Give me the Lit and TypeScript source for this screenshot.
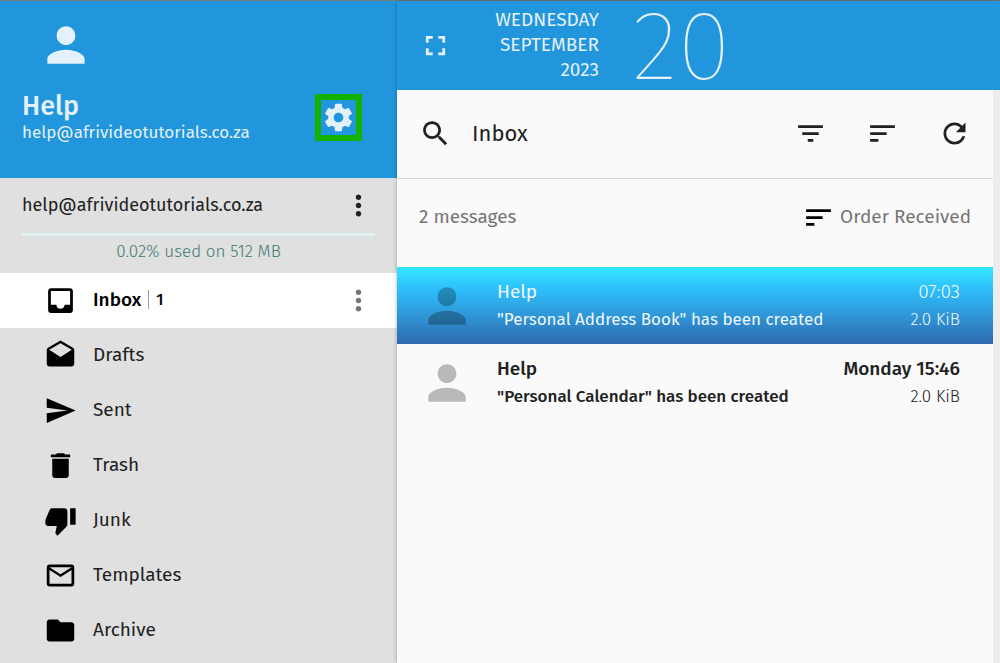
import { LitElement, html, css, svg, nothing } from "lit";
import { customElement, property, state } from "lit/decorators.js";
import { classMap } from "lit/directives/class-map.js";

const ICONS: Record<string, string> = {
  person: "M12 12c2.21 0 4-1.79 4-4s-1.79-4-4-4-4 1.79-4 4 1.79 4 4 4zm0 2c-2.67 0-8 1.34-8 4v2h16v-2c0-2.66-5.33-4-8-4z",
  settings: "M19.43 12.98c.04-.32.07-.64.07-.98s-.03-.66-.07-.98l2.11-1.65c.19-.15.24-.42.12-.64l-2-3.46c-.12-.22-.39-.3-.61-.22l-2.49 1c-.52-.4-1.08-.73-1.69-.98l-.38-2.65C14.46 2.18 14.25 2 14 2h-4c-.25 0-.46.18-.49.42l-.38 2.65c-.61.25-1.17.59-1.69.98l-2.49-1c-.23-.09-.49 0-.61.22l-2 3.46c-.13.22-.07.49.12.64l2.11 1.65c-.04.32-.07.65-.07.98s.03.66.07.98l-2.11 1.65c-.19.15-.24.42-.12.64l2 3.46c.12.22.39.3.61.22l2.49-1c.52.4 1.08.73 1.69.98l.38 2.65c.03.24.24.42.49.42h4c.25 0 .46-.18.49-.42l.38-2.65c.61-.25 1.17-.59 1.69-.98l2.49 1c.23.09.49 0 .61-.22l2-3.46c.12-.22.07-.49-.12-.64l-2.11-1.65zM12 15.5c-1.93 0-3.5-1.57-3.5-3.5s1.57-3.5 3.5-3.5 3.5 1.57 3.5 3.5-1.57 3.5-3.5 3.5z",
  more: "M12 8c1.1 0 2-.9 2-2s-.9-2-2-2-2 .9-2 2 .9 2 2 2zm0 2c-1.1 0-2 .9-2 2s.9 2 2 2 2-.9 2-2-.9-2-2-2zm0 6c-1.1 0-2 .9-2 2s.9 2 2 2 2-.9 2-2-.9-2-2-2z",
  inbox: "M19 3H4.99c-1.11 0-1.98.89-1.98 2L3 19c0 1.1.88 2 1.99 2H19c1.1 0 2-.9 2-2V5c0-1.11-.9-2-2-2zm0 12h-4c0 1.66-1.35 3-3 3s-3-1.34-3-3H4.99V5H19v10z",
  drafts: "M21.99 8c0-.72-.37-1.35-.94-1.7L12 1 2.95 6.3C2.38 6.65 2 7.28 2 8v10c0 1.1.9 2 2 2h16c1.1 0 2-.9 2-2l-.01-10zM12 13L3.74 7.84 12 3l8.26 4.84L12 13z",
  sent: "M2.01 21L23 12 2.01 3 2 10l15 2-15 2z",
  trash: "M6 19c0 1.1.9 2 2 2h8c1.1 0 2-.9 2-2V7H6v12zM19 4h-3.5l-1-1h-5l-1 1H5v2h14V4z",
  junk: "M15 3H6c-.83 0-1.54.5-1.84 1.22l-3.02 7.05c-.09.23-.14.47-.14.73v1.91l.01.01L1 14c0 1.1.9 2 2 2h6.31l-.95 4.57-.03.32c0 .41.17.79.44 1.06L9.83 23l6.59-6.59c.36-.36.58-.86.58-1.41V5c0-1.1-.9-2-2-2zm4 0v12h4V3h-4z",
  templates: "M20 4H4c-1.1 0-1.99.9-1.99 2L2 18c0 1.1.9 2 2 2h16c1.1 0 2-.9 2-2V6c0-1.1-.9-2-2-2zm0 14H4V8l8 5 8-5v10zm-8-7L4 6h16l-8 5z",
  archive: "M10 4H4c-1.1 0-1.99.9-1.99 2L2 18c0 1.1.9 2 2 2h16c1.1 0 2-.9 2-2V8c0-1.1-.9-2-2-2h-8l-2-2z",
  fullscreen: "M7 14H5v5h5v-2H7v-3zm-2-4h2V7h3V5H5v5zm12 7h-3v2h5v-5h-2v3zM14 5v2h3v3h2V5h-5z",
  search: "M15.5 14h-.79l-.28-.27C15.41 12.59 16 11.11 16 9.5 16 5.91 13.09 3 9.5 3S3 5.91 3 9.5 5.91 16 9.5 16c1.61 0 3.09-.59 4.23-1.57l.27.28v.79l5 4.99L20.49 19l-4.99-5zm-6 0C7.01 14 5 11.99 5 9.5S7.01 5 9.5 5 14 7.01 14 9.5 11.99 14 9.5 14z",
  filter: "M10 18h4v-2h-4v2zM3 6v2h18V6H3zm3 7h12v-2H6v2z",
  sort: "M3 18h6v-2H3v2zM3 6v2h18V6H3zm0 7h12v-2H3v2z",
  refresh: "M17.65 6.35C16.2 4.9 14.21 4 12 4c-4.42 0-7.99 3.58-7.99 8s3.57 8 7.99 8c3.73 0 6.84-2.55 7.73-6h-2.08c-.82 2.33-3.04 4-5.65 4-3.31 0-6-2.69-6-6s2.69-6 6-6c1.66 0 3.14.69 4.22 1.78L13 11h7V4l-2.35 2.35z",
};

@customElement("mail-icon")
class MailIcon extends LitElement {
  @property() name = "";
  static styles = css`
    :host { display: block; flex: none; width: 33px; height: 33px; }
    svg { display: block; width: 100%; height: 100%; fill: currentColor; }
  `;
  render() {
    return html`<svg viewBox="0 0 24 24" aria-hidden="true">${svg`<path d=${ICONS[this.name] ?? ""}></path>`}</svg>`;
  }
}

interface Folder { name: string; icon: string; unread?: number; }
interface Message { from: string; subject: string; when: string; size: string; unread: boolean; selected: boolean; }

const FOLDERS: Folder[] = [
  { name: "Inbox", icon: "inbox", unread: 1 },
  { name: "Drafts", icon: "drafts" },
  { name: "Sent", icon: "sent" },
  { name: "Trash", icon: "trash" },
  { name: "Junk", icon: "junk" },
  { name: "Templates", icon: "templates" },
  { name: "Archive", icon: "archive" },
];

const MESSAGES: Message[] = [
  { from: "Help", subject: '"Personal Address Book" has been created', when: "07:03", size: "2.0 KiB", unread: false, selected: true },
  { from: "Help", subject: '"Personal Calendar" has been created', when: "Monday 15:46", size: "2.0 KiB", unread: true, selected: false },
];

@customElement("app-root")
class AppRoot extends LitElement {
  @state() private current = "Inbox";

  static styles = css`
    :host {
      display: grid;
      grid-template-columns: 397px minmax(0, 1fr);
      box-sizing: border-box;
      min-height: 100vh;
      border-top: 1px solid #75797c;
      background: #fafafa;
      color: #212121;
      font: 400 19px/26px "Fira Sans", "Noto Sans", sans-serif;
    }
    * { box-sizing: border-box; }
    h1, h2, p, ul { margin: 0; padding: 0; font: inherit; }
    ul { list-style: none; }
    button {
      display: block;
      padding: 0;
      border: 0;
      background: none;
      color: inherit;
      font: inherit;
      text-align: left;
      cursor: pointer;
    }

    .sidebar { display: flex; flex-direction: column; background: #e0e0e0; }
    .profile {
      display: flex;
      flex-direction: column;
      height: 177px;
      padding: 16px 22px 0;
      background: #2196dc;
      color: #e4f1fb;
    }
    .avatar { width: 56px; height: 56px; }
    .profile .avatar { margin-left: 16px; }
    .identity { display: flex; align-items: flex-start; justify-content: space-between; padding-top: 17px; }
    .name { font-size: 27px; line-height: 32px; font-weight: 500; }
    .mail { font-size: 17px; line-height: 22px; }
    .gear { margin: 4px 13px 0 0; padding: 1px; border: 6px solid #12b300; }

    .account { padding: 14px 22px 0; height: 95px; }
    .account-line { display: flex; justify-content: space-between; align-items: center; height: 27px; font-size: 18px; }
    .account-line span { padding-bottom: 2px; }
    .more { width: 33px; }
    .quota { display: block; height: 3px; margin-top: 14px; background: #e0f2f1; }
    .quota-text { margin-top: 3px; text-align: center; font-size: 17px; line-height: 26px; font-weight: 300; color: #3f7a74; }

    .folder { display: flex; align-items: center; height: 55px; padding: 0 22px 0 44px; }
    .folder.current { background: #fff; color: #000; font-weight: 500; }
    .folder .open { display: flex; align-items: center; flex: 1; gap: 16px; height: 55px; }
    .folder mail-icon { color: #000; }
    .label { display: flex; align-items: center; gap: 7px; padding-bottom: 2px; }
    .count { padding-left: 7px; border-left: 1px solid #9e9e9e; font-size: 16px; line-height: 19px; }
    .folder .more mail-icon { color: #757575; }

    .main { display: flex; flex-direction: column; box-shadow: 0 0 4px rgba(0, 0, 0, 0.3); }
    .banner {
      display: flex;
      align-items: center;
      height: 89px;
      padding-left: 22px;
      background: #2196dc;
      color: #e4f1fb;
    }
    .banner .weekday { margin-left: 42px; width: 105px; padding-bottom: 2px; text-align: right; line-height: 25px; }
    .day { margin-left: 33px; font-size: 98px; line-height: 88px; font-weight: 100; }

    .content { flex: 1; border-right: 7px solid #ededed; }
    .toolbar {
      display: flex;
      align-items: center;
      height: 89px;
      padding: 0 22px 1px;
      border-bottom: 1px solid #d9d9d9;
    }
    .toolbar h2 { flex: 1; margin-left: 20px; font-size: 22px; }
    .actions { display: flex; gap: 39px; }
    .list-head {
      display: flex;
      align-items: center;
      justify-content: space-between;
      height: 88px;
      padding: 0 22px 12px;
      color: #757575;
    }
    .order { display: flex; align-items: center; gap: 5px; }
    .order mail-icon { color: #000; }

    .message {
      display: grid;
      grid-template-columns: 56px minmax(0, 1fr) auto;
      align-items: center;
      column-gap: 22px;
      width: 100%;
      height: 77px;
      padding: 0 33px 0 22px;
    }
    .message .avatar { color: #b9b9b9; }
    .message .text { display: block; }
    .line { display: block; line-height: 28px; }
    .sub { display: block; font-size: 17px; line-height: 27px; }
    .side { text-align: right; font-weight: 300; }
    .unread .text, .unread .side .line { font-weight: 500; }
    .selected {
      background: linear-gradient(#36e6ff, #2ebdfb 30%, #2f9ada 60%, #2f68ae);
      color: #eef8fe;
    }
    .selected .avatar { color: rgba(0, 0, 0, 0.27); }
  `;

  private renderFolder(f: Folder) {
    const current = f.name === this.current;
    return html`<li class=${classMap({ folder: true, current })}>
      <button class="open" @click=${() => (this.current = f.name)}>
        <mail-icon name=${f.icon}></mail-icon>
        <span class="label">${f.name}${f.unread ? html`<span class="count">${f.unread}</span>` : nothing}</span>
      </button>
      ${current ? html`<button class="more" aria-label="Folder options"><mail-icon name="more"></mail-icon></button>` : nothing}
    </li>`;
  }

  private renderMessage(m: Message) {
    return html`<li>
      <button class=${classMap({ message: true, unread: m.unread, selected: m.selected })}>
        <mail-icon class="avatar" name="person"></mail-icon>
        <span class="text"><span class="line">${m.from}</span><span class="sub">${m.subject}</span></span>
        <span class="side"><span class="line">${m.when}</span><span class="sub">${m.size}</span></span>
      </button>
    </li>`;
  }

  render() {
    return html`
      <aside class="sidebar">
        <header class="profile">
          <mail-icon class="avatar" name="person"></mail-icon>
          <div class="identity">
            <div>
              <h1 class="name">Help</h1>
              <p class="mail">help@afrivideotutorials.co.za</p>
            </div>
            <button class="gear" aria-label="Preferences"><mail-icon name="settings"></mail-icon></button>
          </div>
        </header>
        <section class="account">
          <div class="account-line">
            <span>help@afrivideotutorials.co.za</span>
            <button class="more" aria-label="Account options"><mail-icon name="more"></mail-icon></button>
          </div>
          <span class="quota"></span>
          <p class="quota-text">0.02% used on 512 MB</p>
        </section>
        <nav><ul>${FOLDERS.map((f) => this.renderFolder(f))}</ul></nav>
      </aside>
      <main class="main">
        <header class="banner">
          <button aria-label="Full screen"><mail-icon name="fullscreen"></mail-icon></button>
          <div class="weekday">WEDNESDAY<br />SEPTEMBER<br />2023</div>
          <div class="day">20</div>
        </header>
        <div class="content">
          <div class="toolbar">
            <button aria-label="Search"><mail-icon name="search"></mail-icon></button>
            <h2>Inbox</h2>
            <div class="actions">
              <button aria-label="Filter"><mail-icon name="filter"></mail-icon></button>
              <button aria-label="Sort"><mail-icon name="sort"></mail-icon></button>
              <button aria-label="Refresh"><mail-icon name="refresh"></mail-icon></button>
            </div>
          </div>
          <div class="list-head">
            <span>2 messages</span>
            <button class="order"><mail-icon name="sort"></mail-icon>Order Received</button>
          </div>
          <ul>${MESSAGES.map((m) => this.renderMessage(m))}</ul>
        </div>
      </main>
    `;
  }
}
